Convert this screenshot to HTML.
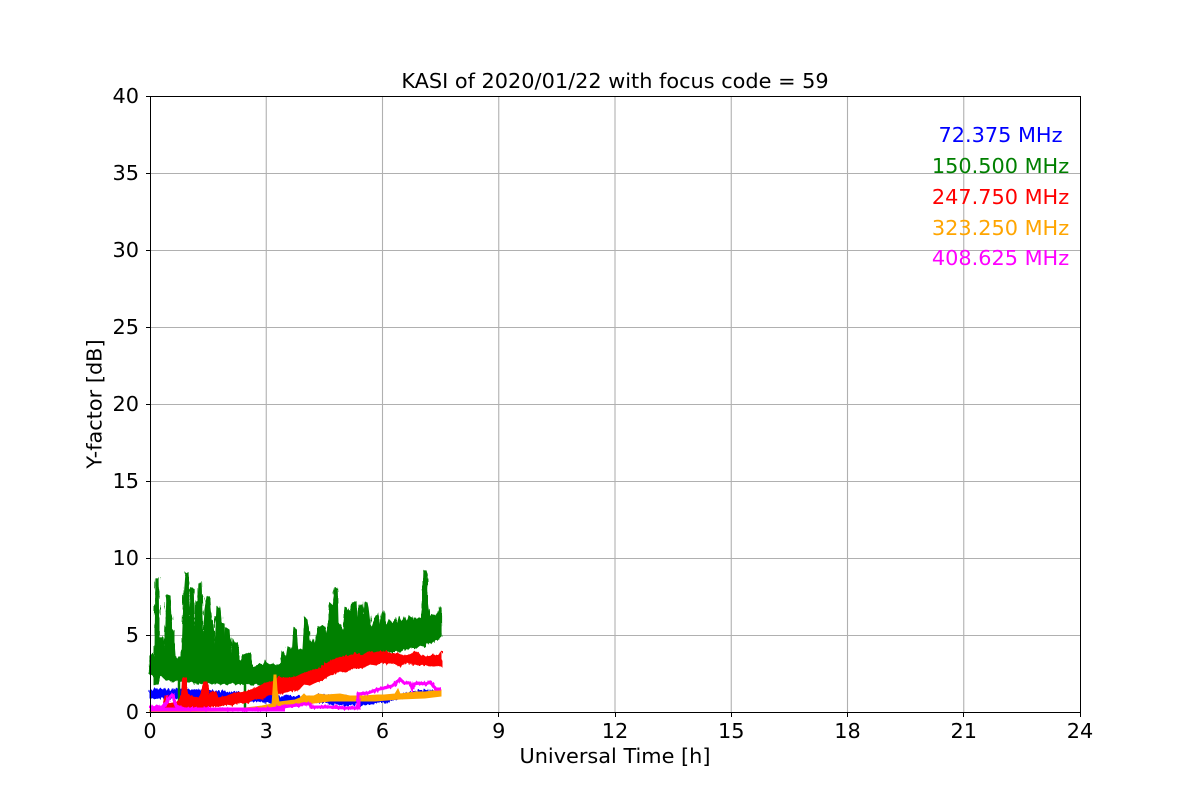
<!DOCTYPE html>
<html><head><meta charset="utf-8"><style>
html,body{margin:0;padding:0;background:#fff;width:1200px;height:800px;overflow:hidden}
svg{display:block}
text{font-family:"DejaVu Sans",sans-serif;fill:#000}
.t{font-size:20.83px}
</style></head><body>
<svg width="1200" height="800" viewBox="0 0 1200 800" xmlns="http://www.w3.org/2000/svg">
<defs>
<filter id="n1" x="-5%" y="-5%" width="110%" height="110%" color-interpolation-filters="sRGB">
<feTurbulence type="fractalNoise" baseFrequency="0.45 0.08" numOctaves="2" seed="4" result="r"/>
<feDisplacementMap in="SourceGraphic" in2="r" scale="7" xChannelSelector="R" yChannelSelector="G"/>
</filter>
<filter id="n2" x="-5%" y="-10%" width="110%" height="120%" color-interpolation-filters="sRGB">
<feTurbulence type="fractalNoise" baseFrequency="0.5 0.1" numOctaves="2" seed="9" result="r"/>
<feDisplacementMap in="SourceGraphic" in2="r" scale="6" xChannelSelector="R" yChannelSelector="G"/>
</filter>
<path id="gp" d="M150 656L153 654L155 660L156 579L158 579L159 655L160 638L163 638L165 657L167 595L170 596L171 630L173 631L175 656L177 660L179 657L182 658L184 600L186 574L188 573L190 655L191 588L193 589L195 655L196 602L198 605L199 584L201 584L203 655L205 610L207 597L209 597L211 620L213 625L215 655L217 607L220 610L221 623L224 624L225 655L226 628L229 630L231 660L233 640L235 644L237 643L239 660L241 662L244 655L246 654L249 655L251 665L253 668L255 667L258 668L260 664L263 666L265 662L268 664L270 665L273 664L276 666L279 665L281 668L282 652L285 656L286 660L288 647L290 648L292 658L294 628L296 630L298 655L299 650L301 650L303 650L305 618L307 620L309 640L311 645L313 640L315 645L317 635L319 628L322 626L325 628L326 640L329 620L331 604L333 610L335 588L337 589L338 625L340 625L342 630L344 630L345 608L347 610L349 612L351 612L353 603L356 602L357 625L360 606L362 605L364 625L365 603L367 603L368 608L370 625L372 628L374 622L376 616L378 615L380 630L382 614L383 612L385 625L387 625L389 620L391 622L393 625L395 620L397 626L399 618L401 622L403 620L405 618L407 624L409 616L411 618L413 622L415 618L417 620L419 618L422 620L423 600L424 571L426 571L427 600L429 618L431 616L433 615L435 618L437 614L439 612L440 608L441 608L441 636L438 639L434 640L431 643L427 641L424 646L420 645L416 648L412 646L408 649L404 648L400 652L396 650L392 652L388 651L384 652L380 655L376 656L372 657L368 656L364 660L360 659L356 661L352 662L348 660L344 663L340 666L336 664L332 667L328 666L324 668L320 668L316 672L312 674L308 675L304 677L300 678L296 681L292 680L288 683L284 683L280 683L276 684L272 682L268 685L264 684L260 685L256 683L252 685L248 683L244 684L240 683L236 684L232 682L228 684L224 683L220 684L216 682L212 684L208 682L204 684L200 682L196 683L192 681L188 682L184 680L180 681L178 680L176 680L173 682L170 679L167 680L164 678L160 674L158 684L155 684L154 676L150 673Z" fill="#008000" stroke="#008000" stroke-width="1.2"/>
<path id="rp" d="M150 710L163 708L165 696L167 696L168 704L178 702L182 695L183 678L186 678L187 695L192 697L200 698L204 682L207 682L208 697L212 692L216 692L218 698L225 697L232 694L238 693L246 692L254 689L260 686L266 683L272 682L278 678L284 678L290 678L296 677L302 674L308 672L314 670L320 669L326 664L332 661L338 658L344 657L350 656L356 654L362 656L368 652L374 653L380 652L386 652L392 654L398 654L404 656L410 655L416 652L421 656L426 657L432 656L438 656L441 652L441 666L436 665L430 666L424 664L418 665L412 663L406 662L400 666L394 663L388 663L382 662L376 665L370 664L364 667L358 668L352 668L346 672L340 671L334 673L328 676L322 680L316 682L310 685L304 684L298 690L292 690L286 692L280 693L274 694L268 695L262 699L256 698L250 701L244 703L238 702L232 705L226 704L220 706L214 705L208 707L200 707L190 708L178 708L160 710L150 711Z" fill="#ff0000" stroke="#ff0000" stroke-width="1"/>
<path id="mp" d="M150 708L162 707L166 703L170 697L172 695L173 696L176 706L185 709L215 709L245 710L270 709L290 706L298 705L299 705L300 705L302 704L310 704L311 707L330 707L345 708L358 708L358 694L368 693L376 690L384 688L392 686L398 681L400 679L404 683L410 683L412 688L414 684L419 683L426 684L430 682L436 689L441 689" fill="none" stroke="#ff00ff" stroke-width="3" stroke-linejoin="miter"/>
</defs>
<rect width="1200" height="800" fill="#fff"/>
<g stroke="#b0b0b0" stroke-width="1.1" fill="none">
<path d="M266.25 96V712M382.5 96V712M498.75 96V712M615 96V712M731.25 96V712M847.5 96V712M963.75 96V712"/>
<path d="M150 635.5H1080M150 558.5H1080M150 481.5H1080M150 404.5H1080M150 327.5H1080M150 250.5H1080M150 173.5H1080"/>
</g>
<!-- blue -->
<g filter="url(#n2)">
<path d="M150 690L160 689L170 690L180 689L190 690L200 690L215 691L230 692L245 693L266 695L285 696L300 697L315 696L330 695L345 697L360 699L380 700L395 696L410 692L425 690L441 692L441 695L425 695L405 697L385 702L360 705L340 705L320 702L300 703L285 703L266 702L245 701L230 700L215 699L200 698L180 698L165 698L150 698Z" fill="#0000ff" stroke="#0000ff" stroke-width="1"/>
</g>
<!-- green -->
<use href="#gp"/>
<g filter="url(#n1)"><use href="#gp"/></g>
<path d="M179 680V708M245 684V710" stroke="#008000" stroke-width="2.5" fill="none"/>
<!-- red -->
<use href="#rp"/>
<g filter="url(#n2)"><use href="#rp"/></g>
<!-- orange -->
<path d="M150 711L165 711L172 708L177 711L245 708L262 706L272 704L273 690L274 675L276 675L277 690L279 702L295 700L300 698L304 694L306 696L314 696L318 694L326 695L340 694L350 696L358 696L362 696L378 695L384 695L395 694L398 689L400 694L415 692L425 692L441 690L441 696L425 698L400 699L375 701L350 701L330 701L314 703L295 706L270 709L240 711L150 712Z" fill="#ffa500" stroke="#ffa500" stroke-width="1"/>
<!-- magenta -->
<use href="#mp"/>
<g filter="url(#n2)"><use href="#mp"/></g>
<path d="M150 709.5H285" stroke="#ff00ff" stroke-width="4"/>
<!-- frame -->
<rect x="150.5" y="96.5" width="930" height="616" fill="none" stroke="#000" stroke-width="1"/>
<g stroke="#000" stroke-width="1" fill="none">
<path d="M150.5 712V717M266.5 712V717M382.5 712V717M498.5 712V717M615.5 712V717M731.5 712V717M847.5 712V717M963.5 712V717M1080.5 712V717"/>
<path d="M146 712.5H150M146 635.5H150M146 558.5H150M146 481.5H150M146 404.5H150M146 327.5H150M146 250.5H150M146 173.5H150M146 96.5H150"/>
</g>
<g class="t" text-anchor="middle">
<text x="150" y="738">0</text><text x="266.25" y="738">3</text><text x="382.5" y="738">6</text><text x="498.75" y="738">9</text><text x="615" y="738">12</text><text x="731.25" y="738">15</text><text x="847.5" y="738">18</text><text x="963.75" y="738">21</text><text x="1080" y="738">24</text>
<text x="615" y="763">Universal Time [h]</text>
<text x="615" y="88">KASI of 2020/01/22 with focus code = 59</text>
<text transform="translate(101.5 404) rotate(-90)">Y-factor [dB]</text>
</g>
<g class="t" text-anchor="end">
<text x="139" y="719">0</text><text x="139" y="642">5</text><text x="139" y="565">10</text><text x="139" y="488">15</text><text x="139" y="411">20</text><text x="139" y="334">25</text><text x="139" y="257">30</text><text x="139" y="180">35</text><text x="139" y="103">40</text>
</g>
<g class="t" text-anchor="middle">
<text x="1000.5" y="142" style="fill:#0000ff">72.375 MHz</text>
<text x="1000.5" y="173" style="fill:#008000">150.500 MHz</text>
<text x="1000.5" y="204" style="fill:#ff0000">247.750 MHz</text>
<text x="1000.5" y="235" style="fill:#ffa500">323.250 MHz</text>
<text x="1000.5" y="265" style="fill:#ff00ff">408.625 MHz</text>
</g>
</svg>
</body></html>
